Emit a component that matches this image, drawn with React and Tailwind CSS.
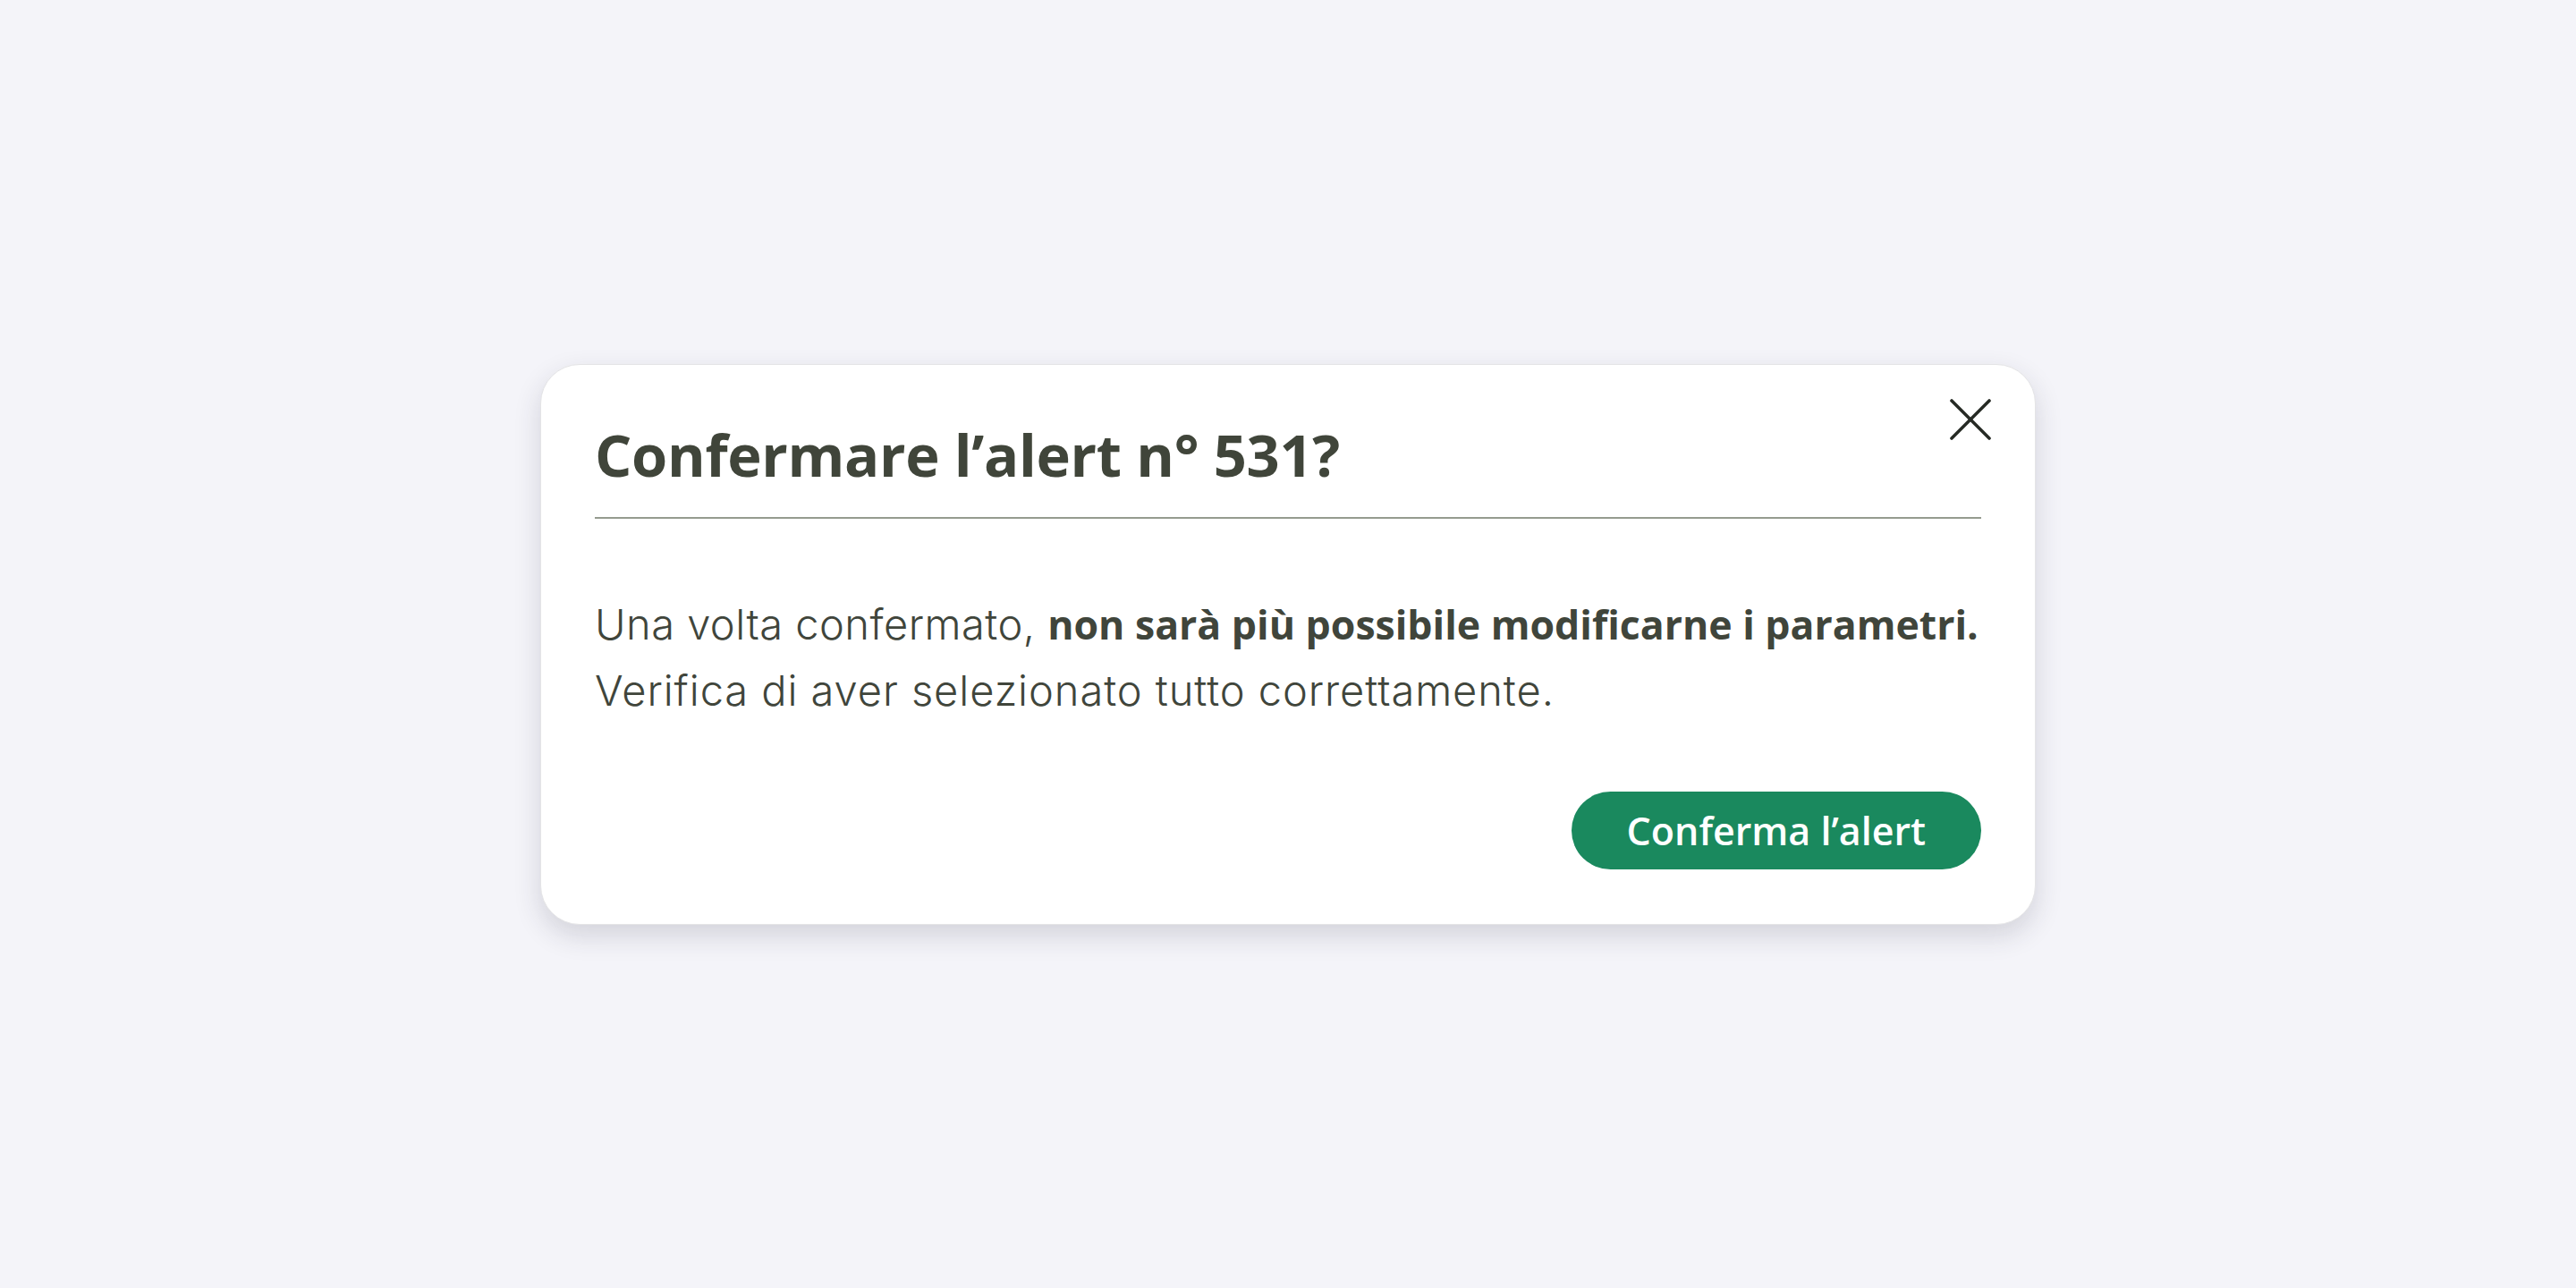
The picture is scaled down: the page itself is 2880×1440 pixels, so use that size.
export default function App() {
  return (
    <div className="min-h-screen w-full bg-[#f4f4f9] flex items-center justify-center">
      <div className="relative w-[1672px] bg-white rounded-[44px] border border-[#e4e4e6] shadow-[0_12px_30px_rgba(40,40,60,0.16)] px-[60px] pt-[55px] pb-[61px]">
        {/* close */}
        <button className="absolute top-[38px] right-[49px] w-[46px] h-[46px] text-[#262a24]">
          <svg viewBox="0 0 46 46" className="w-full h-full" fill="none" stroke="currentColor" strokeWidth="3.6" strokeLinecap="round">
            <line x1="2" y1="2" x2="44" y2="44" />
            <line x1="44" y1="2" x2="2" y2="44" />
          </svg>
        </button>

        <h1 className="font-['Open_Sans',sans-serif] font-bold text-[65px] leading-[90px] tracking-[-0.005em] text-[#40453a] pb-[25px] border-b-2 border-[#959b8f]">
          Confermare l’alert n° 531?
        </h1>

        <div className="mt-[81px] font-['Inter',sans-serif] font-light text-[47px] leading-[74px] text-[#40453b]">
          <p className="whitespace-nowrap tracking-[0.01em]">
            Una volta confermato,{' '}
            <span className="font-['Open_Sans',sans-serif] font-bold text-[44.6px] tracking-normal">non sarà più possibile modificarne i parametri.</span>
          </p>
          <p className="whitespace-nowrap tracking-[0.02em]">Verifica di aver selezionato tutto correttamente.</p>
        </div>

        <div className="mt-[76px] flex justify-end">
          <button className="h-[87px] rounded-full bg-[#1a895e] px-[62px] font-['Open_Sans',sans-serif] font-semibold text-[43px] leading-none text-white">
            Conferma l’alert
          </button>
        </div>
      </div>
    </div>
  );
}
